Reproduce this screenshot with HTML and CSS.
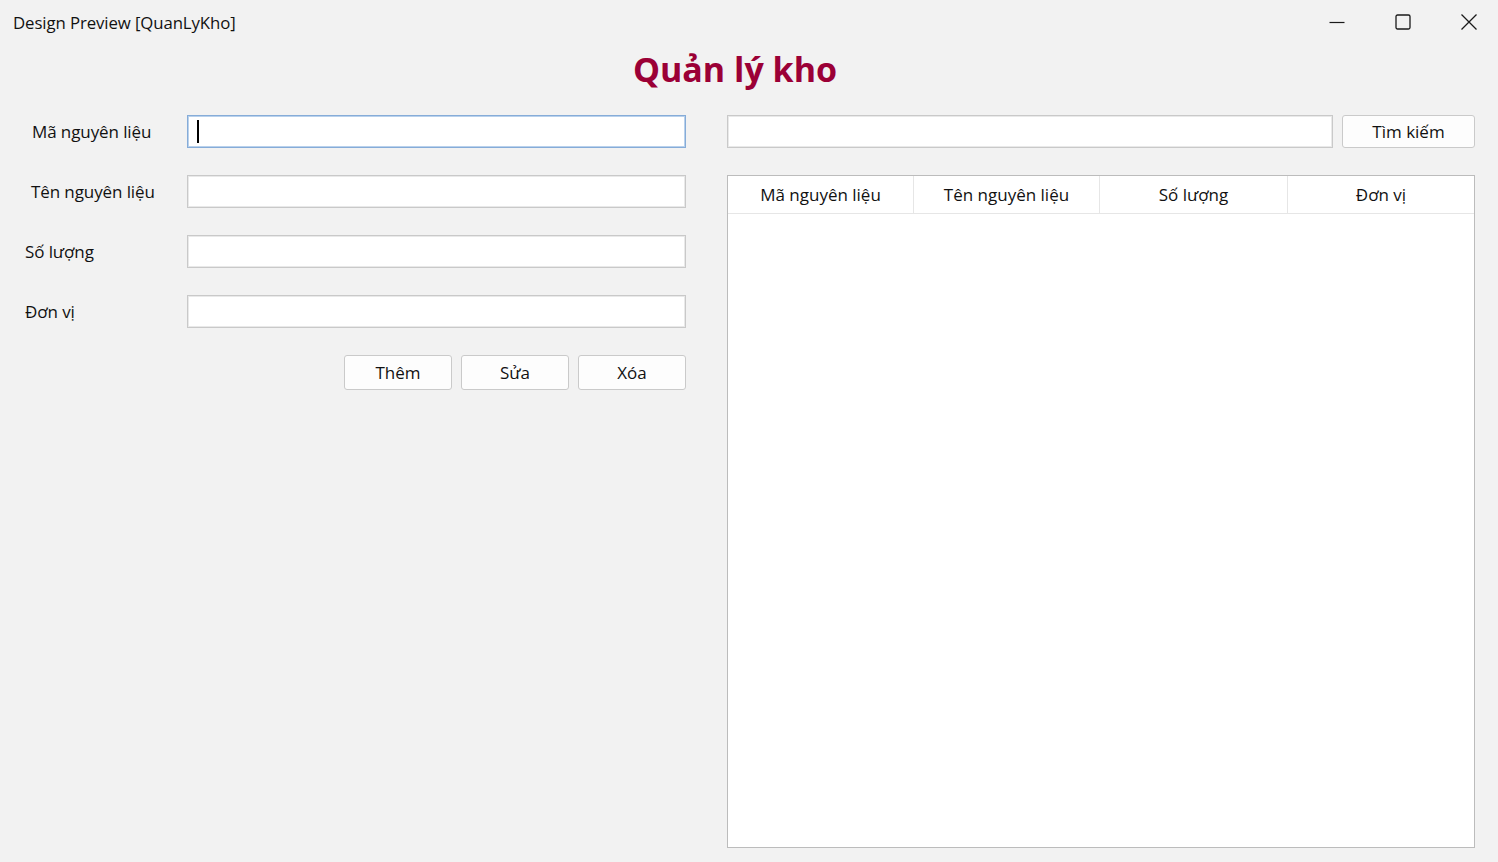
FILE: index.html
```html
<!DOCTYPE html>
<html lang="vi">
<head>
<meta charset="utf-8">
<title>Design Preview [QuanLyKho]</title>
<link rel="stylesheet" href="styles.css">
</head>
<body>
<div class="window">
  <div class="titlebar">
    <div class="title">Design Preview [QuanLyKho]</div>
    <div class="controls">
      <span class="ctl"><svg width="16" height="16" viewBox="0 0 16 16"><path d="M0.5 8.5h15" stroke="#1a1a1a" stroke-width="1.2" fill="none"/></svg></span>
      <span class="ctl"><svg width="16" height="16" viewBox="0 0 16 16"><rect x="1" y="1" width="14" height="14" rx="1.5" stroke="#1a1a1a" stroke-width="1.3" fill="none"/></svg></span>
      <span class="ctl"><svg width="18" height="18" viewBox="0 0 18 18"><path d="M1.5 1.5l15 15M16.5 1.5l-15 15" stroke="#1a1a1a" stroke-width="1.3" fill="none"/></svg></span>
    </div>
  </div>
  <h1 class="heading">Quản lý kho</h1>
  <div class="main">
    <div class="form">
      <div class="row">
        <label class="lbl lbl-a">Mã nguyên liệu</label>
        <div class="input focused"><span class="caret"></span></div>
      </div>
      <div class="row">
        <label class="lbl lbl-b">Tên nguyên liệu</label>
        <div class="input"></div>
      </div>
      <div class="row">
        <label class="lbl">Số lượng</label>
        <div class="input"></div>
      </div>
      <div class="row">
        <label class="lbl">Đơn vị</label>
        <div class="input"></div>
      </div>
      <div class="actions">
        <button class="btn">Thêm</button>
        <button class="btn">Sửa</button>
        <button class="btn">Xóa</button>
      </div>
    </div>
    <div class="side">
      <div class="search">
        <div class="input search-input"></div>
        <button class="btn btn-search">Tìm kiếm</button>
      </div>
      <div class="grid">
        <div class="grid-head">
          <div class="col">Mã nguyên liệu</div>
          <div class="col">Tên nguyên liệu</div>
          <div class="col">Số lượng</div>
          <div class="col">Đơn vị</div>
        </div>
        <div class="grid-body"></div>
      </div>
    </div>
  </div>
</div>
</body>
</html>
```

FILE: styles.css
```css
* { box-sizing: border-box; }
html, body { margin: 0; padding: 0; }
body {
  background: #f2f2f2;
  font-family: "Open Sans", "Noto Sans", sans-serif;
  color: #000;
  width: 1498px;
  height: 862px;
  overflow: hidden;
}
.window { display: flex; flex-direction: column; height: 100%; }
.titlebar {
  height: 44px;
  display: flex;
  align-items: center;
  justify-content: space-between;
  padding-left: 13px;
}
.title { font-size: 16.8px; color: #111; margin-top: 1px; letter-spacing: -0.1px; }
.controls { display: flex; align-items: center; height: 100%; margin-right: -4px; }
.ctl {
  width: 66px;
  height: 100%;
  display: flex;
  align-items: center;
  justify-content: center;
}
.heading {
  margin: 2px 0 0 0;
  height: 52px;
  text-align: center;
  padding-right: 28px;
  font-size: 34px;
  font-weight: 700;
  color: #9b0036;
  line-height: 46px;
}
.main {
  display: flex;
  padding: 17px 23px 14px 25px;
  gap: 41px;
  flex: 1;
  min-height: 0;
}
.form {
  width: 661px;
  display: flex;
  flex-direction: column;
  gap: 27px;
}
.row { display: flex; align-items: center; height: 33px; }
.lbl { width: 162px; font-size: 17px; color: #111; letter-spacing: -0.1px; }
.lbl-a { padding-left: 7px; }
.lbl-b { padding-left: 6px; }
.input {
  flex: 1;
  height: 33px;
  background: #fff;
  border: 1px solid #c9c9c9;
  box-shadow: inset 0 0 0 1px #e9e9e9;
  position: relative;
}
.input.focused {
  border: 1px solid #86acd8;
  box-shadow: inset 0 0 0 1px #b9d1ec;
}
.caret {
  position: absolute;
  left: 9px;
  top: 4px;
  width: 2px;
  height: 23px;
  background: #000;
}
.actions {
  display: flex;
  justify-content: flex-end;
  gap: 9px;
}
.btn {
  width: 108px;
  height: 35px;
  background: #fdfdfd;
  border: 1px solid #cacaca;
  border-radius: 3px;
  font-family: inherit;
  font-size: 17px;
  color: #111;
  padding: 0;
}
.side {
  flex: 1;
  display: flex;
  flex-direction: column;
  gap: 27px;
}
.search { display: flex; gap: 9px; height: 33px; align-items: flex-start; }
.search-input { height: 33px; }
.btn-search { width: 133px; height: 33px; }
.grid {
  flex: 1;
  background: #fff;
  border: 1px solid #bcbcbc;
  display: flex;
  flex-direction: column;
}
.grid-head {
  display: grid;
  grid-template-columns: 186px 186px 188px 1fr;
  height: 38px;
  border-bottom: 1px solid #e6e6e6;
}
.col {
  display: flex;
  align-items: center;
  justify-content: center;
  font-size: 17px;
  color: #111;
  border-right: 1px solid #e6e6e6;
}
.col:last-child { border-right: none; }
.grid-body { flex: 1; }
```
